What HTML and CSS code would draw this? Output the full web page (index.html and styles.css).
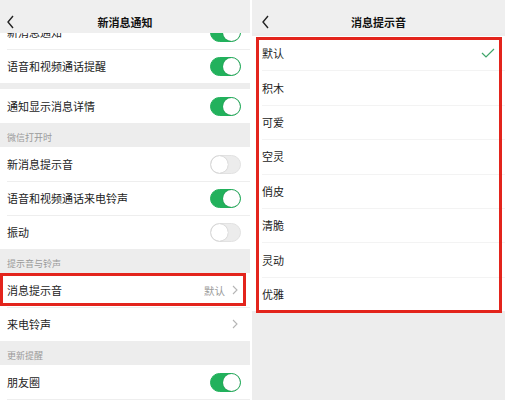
FILE: index.html
```html
<!DOCTYPE html>
<html lang="zh">
<head>
<meta charset="utf-8">
<link rel="stylesheet" href="styles.css">
</head>
<body>
<div class="screens">
  <section class="panel">
    <header class="bar">
      <svg class="back" width="10" height="14" viewBox="0 0 10 14"><polyline points="7,1 2,7 7,13" fill="none" stroke="#222" stroke-width="1.4"/></svg>
      <span class="title">新消息通知</span>
    </header>
    <div class="scroll">
      <div class="group first">
        <div class="row"><span class="label">新消息通知</span><span class="toggle on"></span></div>
        <div class="row"><span class="label">语音和视频通话提醒</span><span class="toggle on"></span></div>
      </div>
      <div class="group gap">
        <div class="row"><span class="label">通知显示消息详情</span><span class="toggle on"></span></div>
      </div>
      <div class="section">微信打开时</div>
      <div class="group">
        <div class="row"><span class="label">新消息提示音</span><span class="toggle"></span></div>
        <div class="row"><span class="label">语音和视频通话来电铃声</span><span class="toggle on"></span></div>
        <div class="row"><span class="label">振动</span><span class="toggle"></span></div>
      </div>
      <div class="section">提示音与铃声</div>
      <div class="group">
        <div class="row marked"><span class="label">消息提示音</span><span class="value">默认</span><svg class="chev" width="6" height="10" viewBox="0 0 6 10"><polyline points="1,1 5,5 1,9" fill="none" stroke="#b5b5b5" stroke-width="1.1"/></svg></div>
        <div class="row"><span class="label">来电铃声</span><svg class="chev" width="6" height="10" viewBox="0 0 6 10"><polyline points="1,1 5,5 1,9" fill="none" stroke="#b5b5b5" stroke-width="1.1"/></svg></div>
      </div>
      <div class="section">更新提醒</div>
      <div class="group">
        <div class="row"><span class="label">朋友圈</span><span class="toggle on"></span></div>
        <div class="row"></div>
      </div>
    </div>
  </section>
  <section class="panel">
    <header class="bar">
      <svg class="back" width="10" height="14" viewBox="0 0 10 14"><polyline points="7,1 2,7 7,13" fill="none" stroke="#222" stroke-width="1.4"/></svg>
      <span class="title">消息提示音</span>
    </header>
    <div class="list">
      <div class="item"><span>默认</span><svg class="check" width="14" height="10" viewBox="0 0 14 10"><polyline points="1,5 5,9 13,1" fill="none" stroke="#3fa56a" stroke-width="1.2"/></svg></div>
      <div class="item"><span>积木</span></div>
      <div class="item"><span>可爱</span></div>
      <div class="item"><span>空灵</span></div>
      <div class="item"><span>俏皮</span></div>
      <div class="item"><span>清脆</span></div>
      <div class="item"><span>灵动</span></div>
      <div class="item"><span>优雅</span></div>
    </div>
  </section>
</div>
</body>
</html>
```
FILE: styles.css
```css
html, body {
  margin: 0;
  padding: 0;
  background: #ffffff;
}
body {
  font-family: "Noto Sans CJK SC", "Noto Sans", sans-serif;
  color: #1c1c1c;
  font-size: 11px;
}
.screens {
  display: flex;
  gap: 2px;
  width: 505px;
  height: 400px;
  overflow: hidden;
}
.panel {
  background: #ededed;
  display: flex;
  flex-direction: column;
  height: 400px;
  overflow: hidden;
  position: relative;
}
.panel:first-child {
  width: 250px;
  flex: none;
}
.panel:last-child {
  flex: 1;
}
.bar {
  height: 33px;
  box-sizing: border-box;
  padding-top: 10px;
  flex: none;
  display: flex;
  align-items: center;
  justify-content: center;
  position: relative;
  background: #efefef;
  z-index: 2;
}
.back {
  position: absolute;
  left: 6px;
  top: 15px;
}
.panel:last-child .back {
  left: 9px;
  top: 15px;
}
.title {
  font-size: 11px;
  font-weight: 700;
  color: #111;
}
.scroll {
  flex: 1;
  overflow: hidden;
}
.group {
  background: #fff;
}
.group.first {
  margin-top: -18px;
}
.group.gap {
  margin-top: 6px;
}
.row {
  height: 34px;
  display: flex;
  align-items: center;
  padding: 0 9px 0 7px;
  position: relative;
}
.row + .row::before {
  content: "";
  position: absolute;
  left: 7px;
  right: 0;
  top: 0;
  border-top: 1px solid #eeeeee;
}
.label {
  flex: 1;
  font-size: 11px;
  color: #1c1c1c;
}
.value {
  color: #9a9a9a;
  margin-right: 7px;
  font-size: 10.5px;
}
.chev {
  margin-right: 3px;
}
.toggle {
  width: 31px;
  height: 19px;
  border-radius: 10px;
  background: #ececec;
  border: 1px solid #e2e2e2;
  box-sizing: border-box;
  position: relative;
}
.toggle::after {
  content: "";
  position: absolute;
  top: 0;
  left: 0;
  width: 17px;
  height: 17px;
  border-radius: 50%;
  background: #fff;
  box-shadow: 0 0 1px rgba(0,0,0,0.35);
}
.toggle.on {
  background: #22b15c;
  border-color: #22b15c;
}
.toggle.on::after {
  left: 12px;
}
.section {
  height: 24px;
  box-sizing: border-box;
  display: flex;
  align-items: flex-end;
  padding: 0 0 3px 7px;
  font-size: 9px;
  color: #9a9a9a;
}
.marked::after {
  content: "";
  position: absolute;
  left: 0;
  right: 4px;
  top: 0;
  bottom: 1px;
  border: 3px solid #e3241c;
  pointer-events: none;
}
.list {
  background: #fff;
  margin-top: 3px;
  position: relative;
}
.list::after {
  content: "";
  position: absolute;
  left: 4px;
  right: 3px;
  top: 1px;
  bottom: -2px;
  border: 3px solid #e3241c;
}
.item {
  height: 34.4px;
  display: flex;
  align-items: center;
  justify-content: space-between;
  padding: 0 10px 0 10px;
  position: relative;
  font-size: 11px;
}
.item + .item::before {
  content: "";
  position: absolute;
  left: 10px;
  right: 0;
  top: 0;
  border-top: 1px solid #f3f3f3;
}
```
